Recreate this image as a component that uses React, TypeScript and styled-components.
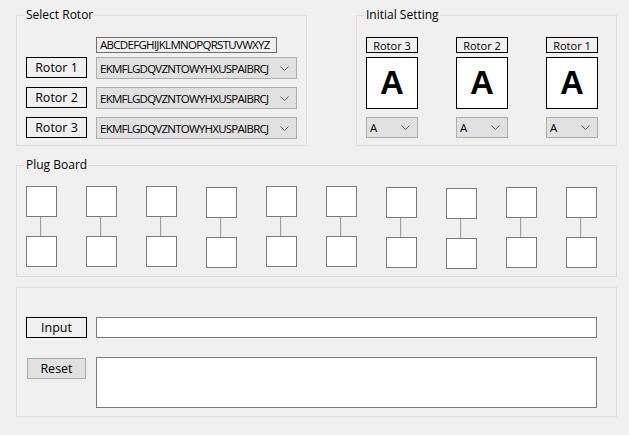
import React from "react";
import styled, { createGlobalStyle } from "styled-components";

const GlobalStyle = createGlobalStyle`
  html, body {
    margin: 0;
    padding: 0;
    background: #f0f0f0;
    font-family: "Open Sans", "Noto Sans", sans-serif;
    color: #000;
  }
`;

const Page = styled.div`
  width: 629px;
  height: 435px;
  box-sizing: border-box;
  padding: 15px 0 0 16px;
  display: flex;
  flex-direction: column;
`;

const TopRow = styled.div`
  display: flex;
  gap: 49px;
  margin-bottom: 19px;
`;

const GroupBox = styled.section<{ $w: number; $h: number }>`
  position: relative;
  box-sizing: border-box;
  width: ${({ $w }) => $w}px;
  height: ${({ $h }) => $h}px;
  border: 1px solid #dcdcdc;
  padding-left: 9px;
`;

const IoGroup = styled(GroupBox)`
  margin-top: 10px;
`;

const Caption = styled.span`
  position: absolute;
  top: -9px;
  left: 7px;
  padding: 0 1px 0 2px;
  background: #f0f0f0;
  font-size: 12px;
  line-height: 16px;
  white-space: nowrap;
`;

const RotorGrid = styled.div`
  padding-top: 21px;
  display: grid;
  grid-template-columns: 61px 201px;
  column-gap: 9px;
  row-gap: 8px;
`;

const AlphabetBox = styled.div`
  grid-column: 2;
  box-sizing: border-box;
  width: 181px;
  height: 16px;
  margin-bottom: -4px;
  border: 1px solid #6d6d6d;
  background: #f0f0f0;
  padding-left: 3px;
  font-size: 11.5px;
  line-height: 14px;
  letter-spacing: -0.7px;
  white-space: nowrap;
  overflow: hidden;
`;

const TagLabel = styled.div<{ $small?: boolean }>`
  box-sizing: border-box;
  height: ${({ $small }) => ($small ? 16 : 21)}px;
  border: 1px solid #000;
  display: flex;
  align-items: center;
  justify-content: center;
  font-size: ${({ $small }) => ($small ? 11 : 12.5)}px;
  white-space: nowrap;
`;

const ComboBox = styled.div<{ $w: number; $h: number }>`
  box-sizing: border-box;
  width: ${({ $w }) => $w}px;
  height: ${({ $h }) => $h}px;
  border: 1px solid #adadad;
  background: #e1e1e1;
  display: flex;
  align-items: center;
  justify-content: space-between;
  padding: 0 7px 0 3px;
  font-size: 11.5px;
  white-space: nowrap;
`;

const ComboText = styled.span<{ $tight?: boolean }>`
  letter-spacing: ${({ $tight }) => ($tight ? "-0.75px" : "0")};
`;

const Chevron = () => (
  <svg width="9" height="5" viewBox="0 0 9 5">
    <polyline points="0.5,0.5 4.5,4.5 8.5,0.5" fill="none" stroke="#606060" strokeWidth="1" />
  </svg>
);

const SettingRow = styled.div`
  padding-top: 21px;
  display: flex;
  gap: 38px;
`;

const SettingColumn = styled.div`
  width: 52px;
  display: flex;
  flex-direction: column;
`;

const Window = styled.div`
  box-sizing: border-box;
  width: 52px;
  height: 52px;
  margin: 4px 0 8px;
  border: 1px solid #000;
  background: #fff;
  display: flex;
  align-items: center;
  justify-content: center;
  font-family: "Liberation Sans", Arial, sans-serif;
  font-weight: bold;
  font-size: 33px;
`;

const PlugRow = styled.div`
  padding-top: 20px;
  display: flex;
  gap: 29px;
`;

const PlugPair = styled.div<{ $drop: number }>`
  display: flex;
  flex-direction: column;
  margin-top: ${({ $drop }) => $drop}px;
`;

const Plug = styled.div`
  box-sizing: border-box;
  width: 31px;
  height: 31px;
  border: 1px solid #7a7a7a;
  background: #fff;
`;

const Wire = styled.div`
  width: 0;
  height: 19px;
  margin-left: 14px;
  border-left: 1px solid #a0a0a0;
  border-right: 1px solid #e6e6e6;
`;

const IoGrid = styled.div`
  padding-top: 29px;
  display: grid;
  grid-template-columns: 61px 501px;
  column-gap: 9px;
  row-gap: 19px;
  align-items: start;
`;

const TextField = styled.div<{ $h: number }>`
  box-sizing: border-box;
  height: ${({ $h }) => $h}px;
  border: 1px solid #7a7a7a;
  background: #fff;
`;

const Button = styled.button`
  box-sizing: border-box;
  width: 59px;
  height: 21px;
  margin: 1px 0 0 1px;
  padding: 0;
  border: 1px solid #adadad;
  background: #e1e1e1;
  font-family: inherit;
  font-size: 12.5px;
  color: #000;
`;

const wiring = "EKMFLGDQVZNTOWYHXUSPAIBRCJ";
const drops = [0, 0, 0, 1, 0, 0, 1, 2, 1, 1];

export default function App() {
  return (
    <>
      <GlobalStyle />
      <Page>
        <TopRow>
          <GroupBox $w={291} $h={131}>
            <Caption>Select Rotor</Caption>
            <RotorGrid>
              <AlphabetBox>ABCDEFGHIJKLMNOPQRSTUVWXYZ</AlphabetBox>
              {["Rotor 1", "Rotor 2", "Rotor 3"].map((name) => (
                <React.Fragment key={name}>
                  <TagLabel>{name}</TagLabel>
                  <ComboBox $w={201} $h={22}>
                    <ComboText $tight>{wiring}</ComboText>
                    <Chevron />
                  </ComboBox>
                </React.Fragment>
              ))}
            </RotorGrid>
          </GroupBox>

          <GroupBox $w={261} $h={131}>
            <Caption>Initial Setting</Caption>
            <SettingRow>
              {["Rotor 3", "Rotor 2", "Rotor 1"].map((name) => (
                <SettingColumn key={name}>
                  <TagLabel $small>{name}</TagLabel>
                  <Window>A</Window>
                  <ComboBox $w={52} $h={21}>
                    <ComboText>A</ComboText>
                    <Chevron />
                  </ComboBox>
                </SettingColumn>
              ))}
            </SettingRow>
          </GroupBox>
        </TopRow>

        <GroupBox $w={601} $h={112}>
          <Caption>Plug Board</Caption>
          <PlugRow>
            {drops.map((d, i) => (
              <PlugPair key={i} $drop={d}>
                <Plug />
                <Wire />
                <Plug />
              </PlugPair>
            ))}
          </PlugRow>
        </GroupBox>

        <IoGroup $w={601} $h={130}>
          <IoGrid>
            <TagLabel>Input</TagLabel>
            <TextField $h={21} />
            <Button>Reset</Button>
            <TextField $h={51} />
          </IoGrid>
        </IoGroup>
      </Page>
    </>
  );
}
